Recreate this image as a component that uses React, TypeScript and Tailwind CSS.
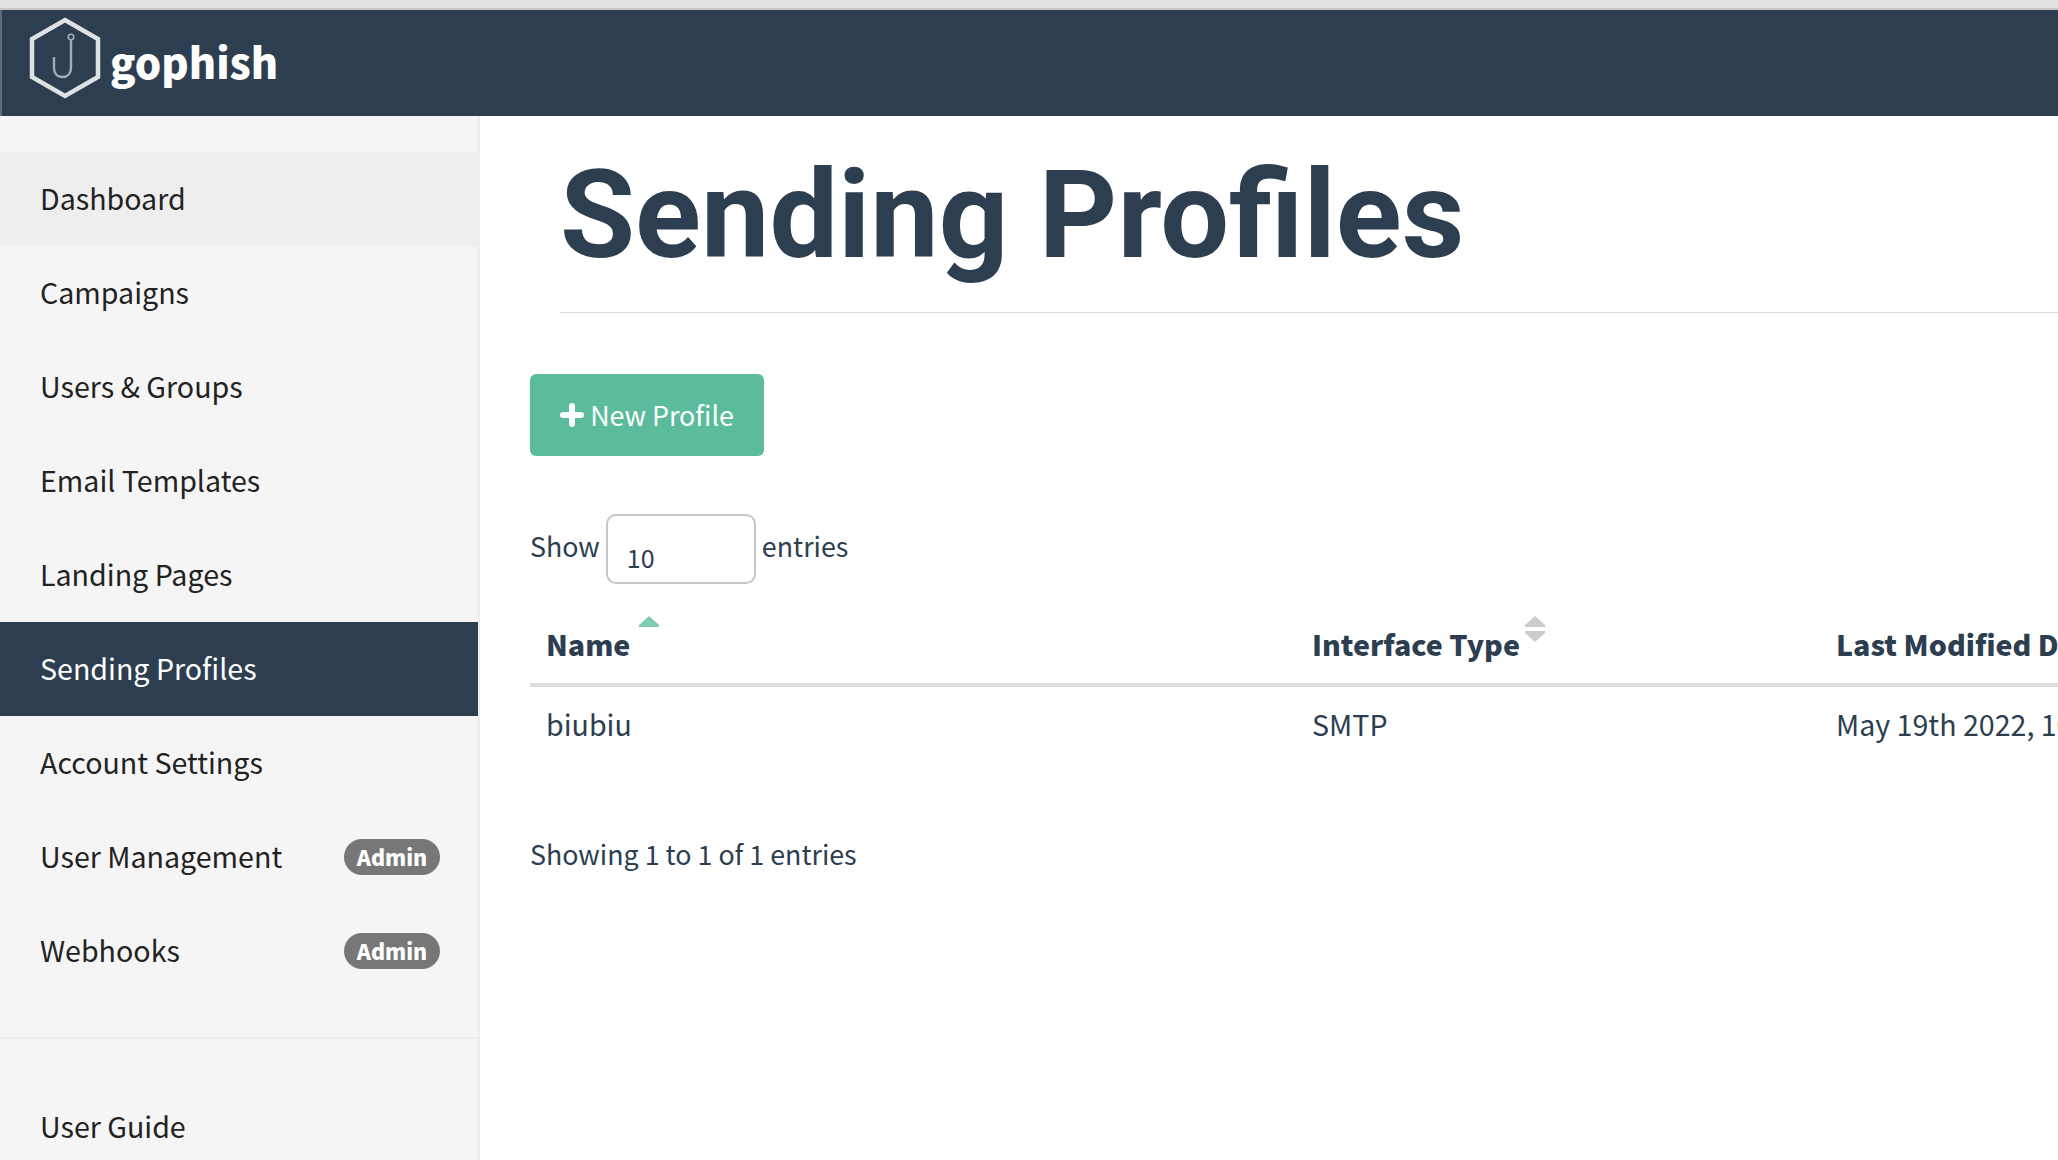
const SANS = "font-['Noto_Sans_CJK_SC','Source_Sans_Pro',sans-serif]";

const navItems: { label: string; admin?: boolean; active?: boolean; hover?: boolean }[] = [
  { label: "Dashboard", hover: true },
  { label: "Campaigns" },
  { label: "Users & Groups" },
  { label: "Email Templates" },
  { label: "Landing Pages" },
  { label: "Sending Profiles", active: true },
  { label: "Account Settings" },
  { label: "User Management", admin: true },
  { label: "Webhooks", admin: true },
];

function Logo() {
  return (
    <svg width="74" height="82" viewBox="0 0 74 82" fill="none" className="mb-[10px] -ml-[1px]">
      <path d="M37 3 L70 22 V60 L37 79 L4 60 V22 Z" stroke="#dfe2e4" strokeWidth="4.5" />
      <circle cx="43" cy="20" r="2.8" stroke="#a3acb5" strokeWidth="1.6" />
      <path d="M43 23 V50 C43 57 39 60 34.500 60 C29 60 26 56 26 51 V40" stroke="#a3acb5" strokeWidth="2.4" />
    </svg>
  );
}

function NavRow({ label, admin, active, hover }: { label: string; admin?: boolean; active?: boolean; hover?: boolean }) {
  return (
    <div
      className={`flex h-[94px] items-center justify-between pl-[40px] pr-[38px] text-[28.6px] ${
        active ? "bg-[#2c3e50] text-white" : hover ? "bg-[#eeeeee] text-[#222222]" : "text-[#222222]"
      }`}
    >
      <span className="mb-[1px]">{label}</span>
      {admin && (
        <span className="flex h-[36px] w-[96px] items-center justify-center rounded-full bg-[#777777] text-[21.5px] font-black text-white">
          Admin
        </span>
      )}
    </div>
  );
}

function SortCaret({ up, color }: { up?: boolean; color: string }) {
  return (
    <svg width="20" height="11" viewBox="0 0 20 11" className="block">
      <path d={up ? "M10 0 L20 9 V11 H0 V9 Z" : "M0 0 H20 V2 L10 11 L0 2 Z"} fill={color} />
    </svg>
  );
}

export default function App() {
  return (
    <div className={`flex h-[1160px] w-[2058px] flex-col overflow-hidden bg-white text-[26.8px] ${SANS}`}>
      <div className="h-[8px] bg-[#e2e2e2]" />
      <div className="h-[2px] bg-[#c8c8c8]" />
      <header className="flex h-[106px] items-center border-l-2 border-[#5c6b79] bg-[#2c3e50] pl-[27px]">
        <Logo />
        <span className="mb-[3px] ml-[8px] text-[41.7px] leading-none font-black text-white">gophish</span>
      </header>
      <div className="flex min-h-0 flex-1">
        <aside className="w-[480px] shrink-0 border-r-2 border-[#eeeeee] bg-[#f5f5f5] pt-[36px]">
          {navItems.map((item) => (
            <NavRow key={item.label} {...item} />
          ))}
          <div className="mt-[39px] border-t-2 border-[#eeeeee] pt-[41px]">
            <NavRow label="User Guide" />
          </div>
        </aside>
        <main className="min-w-0 flex-1 pl-[50px] text-[#2c3e50]">
          <div className="ml-[30px] h-[197px] border-b border-[#dddddd] font-['Roboto',sans-serif] text-[122px] leading-[200px] font-bold">
            Sending Profiles
          </div>
          <button className="mt-[61px] flex h-[82px] w-[234px] items-center justify-center gap-[6px] rounded-[6px] bg-[#5bbb9d] text-white">
            <svg width="24" height="24" viewBox="0 0 24 24">
              <path d="M12 3 V21 M3 12 H21" stroke="white" strokeWidth="6" strokeLinecap="round" />
            </svg>
            New Profile
          </button>
          <div className="mt-[58px] flex items-center">
            <span className="mb-[6px]">Show</span>
            <div className="mx-[6px] flex h-[70px] w-[150px] items-center rounded-[10px] border-2 border-[#c2c5ca] pt-[17px] pl-[19px] text-[25px]">
              10
            </div>
            <span className="mb-[6px]">entries</span>
          </div>
          <div className="mt-[31px] grid w-[1600px] grid-cols-[766px_524px_310px] border-b-4 border-[#dddddd] text-[28.6px] font-black">
            <div className="relative h-[68px] pt-[8px] pl-[16px]">
              Name
              <span className="absolute top-[1px] left-[109px]">
                <SortCaret up color="#7fcbb2" />
              </span>
            </div>
            <div className="relative pt-[8px] pl-[16px]">
              Interface Type
              <span className="absolute top-[1px] left-[229px] flex flex-col gap-[4px]">
                <SortCaret up color="#cccccc" />
                <SortCaret color="#cccccc" />
              </span>
            </div>
            <div className="pt-[8px] pl-[16px] whitespace-nowrap">Last Modified Date</div>
          </div>
          <div className="grid w-[1600px] grid-cols-[766px_524px_310px] text-[28.6px]">
            <div className="h-[80px] pt-[16px] pl-[16px]">biubiu</div>
            <div className="pt-[16px] pl-[16px]">SMTP</div>
            <div className="pt-[16px] pl-[16px] whitespace-nowrap">May 19th 2022, 10:32:21 am</div>
          </div>
          <div className="mt-[67px]">Showing 1 to 1 of 1 entries</div>
        </main>
      </div>
    </div>
  );
}
